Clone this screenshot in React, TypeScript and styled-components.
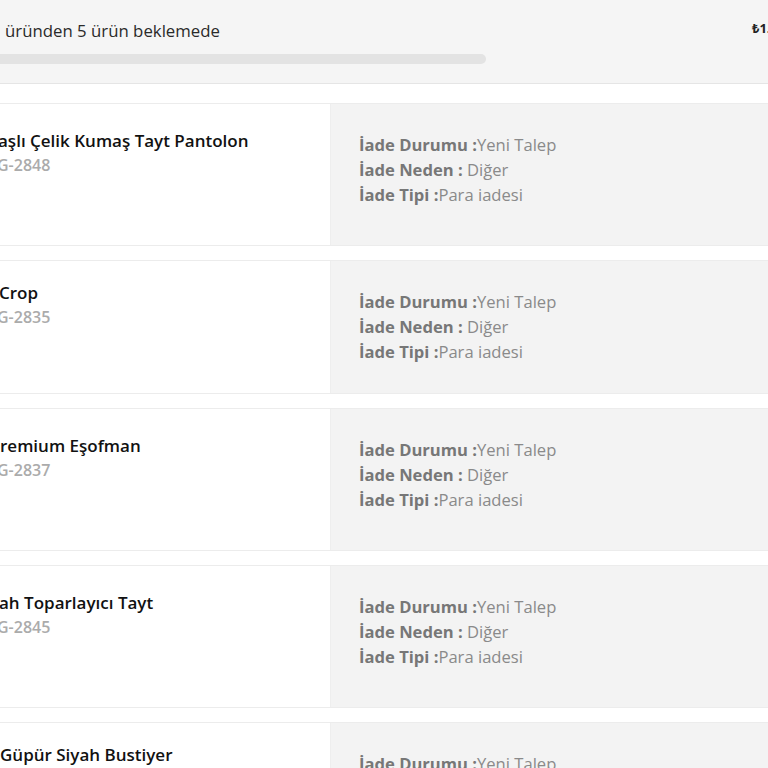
import { createGlobalStyle, styled } from "styled-components";

const GlobalStyle = createGlobalStyle`
  html, body {
    margin: 0;
    padding: 0;
    background: #ffffff;
  }
  body {
    font-family: "Open Sans", "Noto Sans", sans-serif;
    color: #222;
  }
`;

type ReturnItem = {
  title: string;
  code: string;
  status: string;
  reason: string;
  type: string;
  height: number;
  shift: number;
};

const items: ReturnItem[] = [
  { title: "aşlı Çelik Kumaş Tayt Pantolon", code: "G-2848", status: "Yeni Talep", reason: "Diğer", type: "Para iadesi", height: 143, shift: -2 },
  { title: "Crop", code: "G-2835", status: "Yeni Talep", reason: "Diğer", type: "Para iadesi", height: 134, shift: -1 },
  { title: "remium Eşofman", code: "G-2837", status: "Yeni Talep", reason: "Diğer", type: "Para iadesi", height: 143, shift: 0 },
  { title: "ah Toparlayıcı Tayt", code: "G-2845", status: "Yeni Talep", reason: "Diğer", type: "Para iadesi", height: 143, shift: -1 },
  { title: "Güpür Siyah Bustiyer", code: "G-2851", status: "Yeni Talep", reason: "Diğer", type: "Para iadesi", height: 134, shift: 0 },
];

export default function App() {
  return (
    <>
      <GlobalStyle />
      <Page>
        <Header>
          <Summary>
            <SummaryText>üründen 5 ürün beklemede</SummaryText>
            <Progress />
          </Summary>
          <Price>₺1.249,90</Price>
        </Header>
        <List>
          {items.map((item, i) => (
            <Card key={i} $height={item.height}>
              <Product>
                <Title $shift={item.shift}>{item.title}</Title>
                <Code>{item.code}</Code>
              </Product>
              <Details>
                <Line>
                  <Label>İade Durumu :</Label>
                  <Value>{item.status}</Value>
                </Line>
                <Line>
                  <Label>İade Neden : </Label>
                  <Value>{item.reason}</Value>
                </Line>
                <Line>
                  <Label>İade Tipi :</Label>
                  <Value>{item.type}</Value>
                </Line>
              </Details>
            </Card>
          ))}
        </List>
      </Page>
    </>
  );
}

const Page = styled.div`
  width: 768px;
  height: 768px;
  overflow: hidden;
`;

const Header = styled.div`
  display: flex;
  height: 83px;
  background: #f5f5f5;
  border-bottom: 1px solid #e5e5e5;
`;

const Summary = styled.div`
  display: flex;
  flex-direction: column;
  width: 486px;
  padding-top: 20px;
  gap: 12px;
`;

const SummaryText = styled.div`
  padding-left: 5px;
  font-size: 16.8px;
  line-height: 22px;
  color: #2a2a2a;
`;

const Progress = styled.div`
  height: 10px;
  border-radius: 0 5px 5px 0;
  background: #e3e3e3;
`;

const Price = styled.div`
  margin-left: auto;
  width: 16px;
  padding-top: 19px;
  font-size: 13px;
  font-weight: 700;
  white-space: nowrap;
  color: #222;
`;

const List = styled.div`
  display: flex;
  flex-direction: column;
  gap: 14px;
  padding-top: 19px;
`;

const Card = styled.div<{ $height: number }>`
  display: flex;
  height: ${(p) => p.$height}px;
  width: 780px;
  margin-left: -1px;
  border: 1px solid #ececec;
  box-sizing: border-box;
  flex-shrink: 0;
`;

const Product = styled.div`
  display: flex;
  flex-direction: column;
  justify-content: center;
  width: 330px;
  padding-bottom: 44px;
  box-sizing: border-box;
  background: #ffffff;
`;

const Title = styled.div<{ $shift: number }>`
  margin-left: ${(p) => p.$shift}px;
  font-size: 17px;
  line-height: 24px;
  font-weight: 600;
  color: #111;
  white-space: nowrap;
`;

const Code = styled.div`
  margin-left: -3px;
  font-size: 16px;
  line-height: 24px;
  font-weight: 600;
  color: #ababab;
`;

const Details = styled.div`
  display: flex;
  flex-direction: column;
  flex: 1;
  padding: 28px 0 0 28px;
  background: #f3f3f3;
  border-left: 1px solid #eeeeee;
`;

const Line = styled.div`
  font-size: 16.6px;
  line-height: 25px;
  white-space: pre;
`;

const Label = styled.span`
  font-weight: 700;
  color: #777;
`;

const Value = styled.span`
  font-weight: 400;
  color: #8a8a8a;
`;
